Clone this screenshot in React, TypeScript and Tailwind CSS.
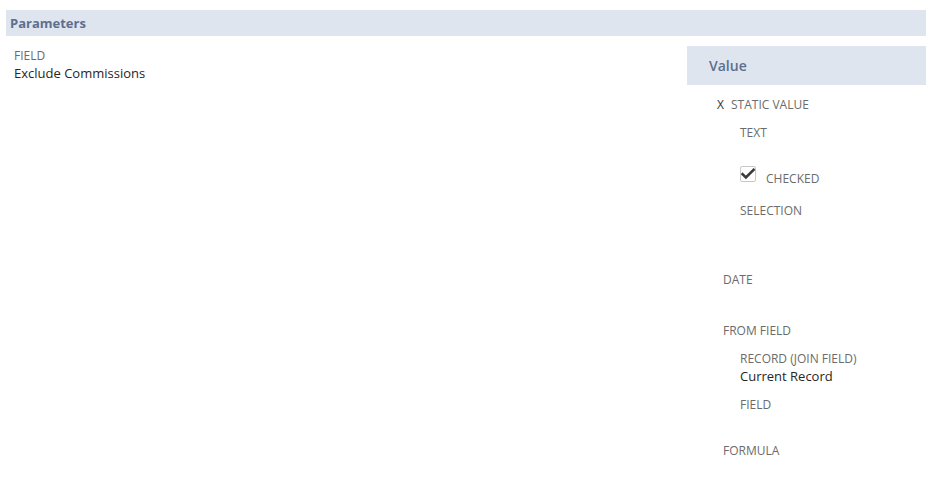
import React from 'react';

const CheckMark = () => (
  <svg width="14" height="14" viewBox="0 0 14 14" className="text-[#3a3a3a]">
    <path d="M1.5 7.2l3.4 3.3L12.6 2.8" fill="none" stroke="currentColor" strokeWidth="2.6" strokeLinecap="square" />
  </svg>
);

const Label: React.FC<{ children: React.ReactNode; className?: string }> = ({ children, className = '' }) => (
  <div className={`text-[12px] leading-[16px] uppercase text-[#6b6b6b] ${className}`}>{children}</div>
);

export default function App() {
  return (
    <div className="w-[927px] h-[487px] bg-white font-['Open_Sans',sans-serif]">
      {/* Section header */}
      <div className="pt-[10px] pl-[6px] pr-[1px]">
        <div className="h-[26px] bg-[#dfe5ef] flex items-center pl-[4px] pt-[2px] text-[13px] font-bold text-[#5d6f8e]">
          Parameters
        </div>
      </div>

      <div className="flex mt-[10px]">
        {/* Field column */}
        <div className="flex-1 pl-[14px] pt-[2px]">
          <Label>Field</Label>
          <div className="text-[13px] leading-[18px] text-[#262626]">Exclude Commissions</div>
        </div>

        {/* Value column */}
        <div className="w-[239px] mr-[1px]">
          <div className="h-[39px] bg-[#dfe5ef] flex items-center pl-[22px] text-[14px] font-semibold text-[#5d6f8e]">
            Value
          </div>

          <div className="flex items-center mt-[12px] pl-[30px] text-[12px] leading-[16px] text-[#6b6b6b]">
            <span className="text-[#333] w-[14px]">X</span>
            <span className="uppercase">Static Value</span>
          </div>

          <Label className="mt-[12px] pl-[53px]">Text</Label>

          <div className="flex items-start mt-[25px] pl-[53px]">
            <div className="w-[16px] h-[16px] border border-[#c8c8c8] rounded-[2px] flex items-center justify-center">
              <CheckMark />
            </div>
            <Label className="ml-[10px] mt-[5px]">Checked</Label>
          </div>

          <Label className="mt-[16px] pl-[53px]">Selection</Label>

          <Label className="mt-[53px] pl-[36px]">Date</Label>

          <Label className="mt-[35px] pl-[36px]">From Field</Label>

          <Label className="mt-[12px] pl-[53px]">Record (Join Field)</Label>
          <div className="pl-[53px] text-[13px] leading-[18px] text-[#262626]">Current Record</div>

          <Label className="mt-[12px] pl-[53px]">Field</Label>

          <Label className="mt-[30px] pl-[36px]">Formula</Label>
        </div>
      </div>
    </div>
  );
}
